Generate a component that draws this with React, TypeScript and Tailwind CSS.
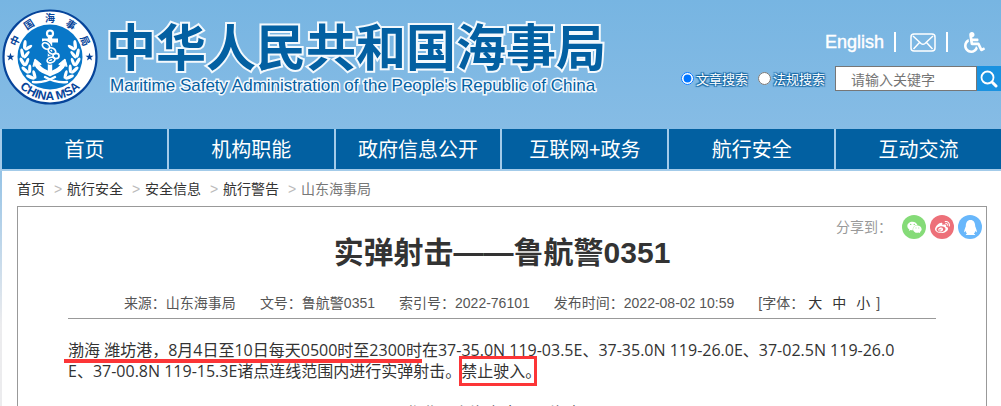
import { useState } from "react";
import { FaWeibo, FaWeixin, FaQq, FaWheelchair } from "react-icons/fa";

const NAV_ITEMS = ["首页", "机构职能", "政府信息公开", "互联网+政务", "航行安全", "互动交流"];

const CRUMBS = ["首页", "航行安全", "安全信息", "航行警告"];

const META = ["来源：山东海事局", "文号：鲁航警0351", "索引号：2022-76101", "发布时间：2022-08-02 10:59"];

const SHARES = [
  { name: "微信", color: "bg-[#85db78]", Icon: FaWeixin },
  { name: "微博", color: "bg-[#ed7079]", Icon: FaWeibo },
  { name: "QQ", color: "bg-[#68b7fb]", Icon: FaQq },
];

const RING_CHARS = [
  { char: "中", angle: -65 },
  { char: "国", angle: -33 },
  { char: "海", angle: 0 },
  { char: "事", angle: 33 },
  { char: "局", angle: 65 },
];

const LEAVES = [-26, -8, 10, 28, 46];

function Wreath() {
  return (
    <g fill="#fff">
      {LEAVES.map((a) => (
        <g key={a} transform={`rotate(${-a})`}>
          <ellipse cx="-28" cy="0" rx="1.7" ry="4.8" transform="rotate(-20 -28 0)" />
          <ellipse cx="-23.5" cy="1" rx="1.6" ry="4.4" transform="rotate(30 -23.5 1)" />
        </g>
      ))}
    </g>
  );
}

function Emblem() {
  return (
    <svg viewBox="-48 -48 96 96" className="w-24 h-24 shrink-0" role="img" aria-label="中国海事局">
      <circle r="46.5" fill="#fff" stroke="#06449a" strokeWidth="2.2" />
      <circle r="32.5" fill="#0877c8" />
      <Wreath />
      <g transform="scale(-1 1)">
        <Wreath />
      </g>
      <g fill="none" stroke="#fff" strokeLinecap="round">
        <circle cx="0" cy="-23.5" r="3" strokeWidth="2.2" />
        <path d="M-8 -16.5H8" strokeWidth="4" strokeLinecap="butt" />
        <path d="M0 -20V14" strokeWidth="4.4" />
        <path d="M-14 6C-11 13 -6 14 0 17C6 14 11 13 14 6" strokeWidth="4.6" />
        <path d="M-17 9L-15 2L-9 7ZM17 9L15 2L9 7Z" strokeWidth="1" fill="#fff" />
        <g stroke="#0877c8" strokeWidth="3.8">
          <ellipse cx="-4" cy="-11" rx="4" ry="2.8" transform="rotate(35 -4 -11)" />
          <ellipse cx="2" cy="-6" rx="4" ry="2.8" transform="rotate(30 2 -6)" />
          <ellipse cx="1" cy="3" rx="4" ry="2.6" transform="rotate(-20 1 3)" />
        </g>
        <g strokeWidth="1.7">
          <ellipse cx="-4" cy="-11" rx="4" ry="2.8" transform="rotate(35 -4 -11)" />
          <ellipse cx="2" cy="-6" rx="4" ry="2.8" transform="rotate(30 2 -6)" />
          <ellipse cx="6" cy="-1" rx="3" ry="2.6" />
          <ellipse cx="1" cy="3" rx="4" ry="2.6" transform="rotate(-20 1 3)" />
        </g>
        <path d="M-17 25C-9 26 -2 24 5 20M17 25C9 26 2 24 -5 20" strokeWidth="2.4" />
      </g>
      <g fill="#06449a">
        {RING_CHARS.map(({ char, angle }) => (
          <text
            key={char}
            y="-35"
            textAnchor="middle"
            transform={`rotate(${angle})`}
            className="font-['Noto_Sans_CJK_SC',sans-serif] text-[10px] font-bold"
          >
            {char}
          </text>
        ))}
        <path id="emblem-arc" d="M-43 0A43 43 0 0 0 43 0" fill="none" />
        <text textAnchor="middle" className="font-['Liberation_Sans',sans-serif] text-[12px] font-bold">
          <textPath href="#emblem-arc" startOffset="50%">CHINA MSA</textPath>
        </text>
        <path d="M0 -4.2L1 -1.3H4L1.6 .6L2.5 3.5L0 1.7L-2.5 3.5L-1.6 .6L-4 -1.3H-1Z" transform="translate(-39.5 0)" />
        <path d="M0 -4.2L1 -1.3H4L1.6 .6L2.5 3.5L0 1.7L-2.5 3.5L-1.6 .6L-4 -1.3H-1Z" transform="translate(39.5 0)" />
      </g>
    </svg>
  );
}

function MailIcon() {
  return (
    <svg viewBox="0 0 26 19" className="w-[26px] h-[19px]" fill="none" stroke="#fff" strokeWidth="1.5">
      <rect x="1" y="1" width="24" height="17" rx="3" />
      <path d="M3 3L11 10.5Q13 12 15 10.5L23 3M3.5 16L9.5 9.5M22.5 16L16.5 9.5" />
    </svg>
  );
}

function SearchIcon() {
  return (
    <svg viewBox="0 0 18 18" className="w-[18px] h-[18px]" fill="none" stroke="#fff" strokeLinecap="round">
      <circle cx="7.5" cy="7.5" r="6" strokeWidth="1.8" />
      <path d="M12.5 12.5L16 16" strokeWidth="3" />
    </svg>
  );
}

function SearchBar() {
  const [scope, setScope] = useState("文章搜索");
  const [keyword, setKeyword] = useState("");

  return (
    <form className="flex items-center" onSubmit={(e) => e.preventDefault()}>
      {["文章搜索", "法规搜索"].map((name) => (
        <label
          key={name}
          className="flex items-center gap-0.5 mr-2.5 text-[13px] text-white [text-shadow:1px_1px_1px_#1466a3,-1px_-1px_1px_#1466a3,1px_-1px_1px_#1466a3,-1px_1px_1px_#1466a3]"
        >
          <input
            type="radio"
            name="scope"
            checked={scope === name}
            onChange={() => setScope(name)}
            className="w-[13px] h-[13px]"
          />
          {name}
        </label>
      ))}
      <input
        type="text"
        aria-label="关键字"
        value={keyword}
        onChange={(e) => setKeyword(e.target.value)}
        placeholder="请输入关键字"
        className="w-[142px] h-[25px] bg-white border border-[#767676] pl-[15px] text-sm text-gray-800 placeholder-[#757575]"
      />
      <button type="submit" aria-label="搜索" className="w-6 h-[25px] bg-[#1a92e0] flex items-center justify-center">
        <SearchIcon />
      </button>
    </form>
  );
}

function Header() {
  return (
    <header className="h-[129px] flex items-start justify-between bg-linear-to-b from-[#77b5e2] to-[#86bce5]">
      <div className="flex pl-0.5">
        <div className="pt-[9px]">
          <Emblem />
        </div>
        <div className="pl-2 pt-4 text-[#0360a2] whitespace-nowrap [paint-order:stroke_fill]">
          <h1 className="text-[50px] leading-[56px] font-bold [-webkit-text-stroke:4px_#f4f9fd]">中华人民共和国海事局</h1>
          <p className="pl-1 pt-1 text-[17px] leading-5 font-['Liberation_Sans',sans-serif] [-webkit-text-stroke:3px_#f4f9fd]">
            Maritime Safety Administration of the People's Republic of China
          </p>
        </div>
      </div>
      <div className="flex flex-col items-end pt-[30px] gap-3 shrink-0">
        <div className="flex items-center h-6 pr-4 text-white">
          <a href="#english" className="text-lg leading-6 font-['Liberation_Sans',sans-serif] [-webkit-text-stroke:0.4px_white]">
            English
          </a>
          <span className="w-0.5 h-5 bg-white ml-2.5 mr-3.5" />
          <a href="#mail" aria-label="邮箱">
            <MailIcon />
          </a>
          <span className="w-0.5 h-5 bg-white ml-2.5 mr-4" />
          <a href="#accessible" aria-label="无障碍">
            <FaWheelchair size={21} />
          </a>
        </div>
        <SearchBar />
      </div>
    </header>
  );
}

export default function App() {
  const [fontSize, setFontSize] = useState("小");

  return (
    <div className="h-screen overflow-hidden bg-linear-to-b from-[#77b5e2] from-30% to-[#ececee] to-80% font-['Noto_Sans_CJK_SC',sans-serif]">
      <Header />
      <nav className="grid grid-cols-6 gap-0.5 pl-0.5 pb-0.5 bg-[#a3cbe9]">
        {NAV_ITEMS.map((item) => (
          <a key={item} href="#nav" className="h-10 bg-[#0260a1] text-white text-xl leading-10 text-center">
            {item}
          </a>
        ))}
      </nav>

      <main className="ml-0.5 bg-white pl-[15px] pr-3.5 h-full font-['Liberation_Sans','Noto_Sans_CJK_SC',sans-serif]">
        <div className="flex items-center h-[35px] text-sm text-[#333]">
          {CRUMBS.map((crumb) => (
            <span key={crumb} className="flex items-center">
              <a href="#crumb">{crumb}</a>
              <span className="w-[22px] pl-1 text-center text-[#bbb]">&gt;</span>
            </span>
          ))}
          <span className="text-[#777]">山东海事局</span>
        </div>

        <article className="border border-[#999] h-full">
          <div className="flex items-center justify-end gap-1 pt-2 pr-1">
            <span className="text-sm text-[#999] mr-1.5">分享到：</span>
            {SHARES.map(({ name, color, Icon }) => (
              <button
                key={name}
                aria-label={name}
                className={`w-6 h-6 rounded-full flex items-center justify-center text-white ${color}`}
              >
                <Icon size={15} />
              </button>
            ))}
          </div>

          <div className="px-[50px]">
            <h2 className="text-3xl leading-7 font-bold text-center text-[#333]">实弹射击——鲁航警0351</h2>
            <div className="flex justify-center gap-6 mt-6 pb-1 h-7 items-center border-b border-[#999] text-sm text-[#555] whitespace-nowrap">
              {META.map((item) => (
                <span key={item}>{item}</span>
              ))}
              <span className="flex">
                [字体：
                {["大", "中", "小"].map((size) => (
                  <button
                    key={size}
                    aria-pressed={fontSize === size}
                    onClick={() => setFontSize(size)}
                    className="ml-1 mr-1.5 text-[#333]"
                  >
                    {size}
                  </button>
                ))}
                ]
              </span>
            </div>

            <p className="mt-[21px] pr-5 text-base leading-[21px] text-[#333] break-all font-['Open_Sans','Noto_Sans_CJK_SC',sans-serif]">
              <span className="relative">
                渤海 潍坊港，8月4日至10日每天0500时至2300时
                <span className="absolute -left-1 right-0 -bottom-0.5 h-1 bg-[#fc3537]" />
              </span>
              在37-35.0N 119-03.5E、37-35.0N 119-26.0E、37-02.5N 119-26.0E、37-00.8N 119-15.3E诸点连线范围内进行实弹射击。
              <span className="relative">
                禁止驶入。
                <span className="absolute -left-0.5 right-1 -inset-y-1 border-3 border-[#fc3537]" />
              </span>
            </p>
            <p className="mt-[21px] text-base leading-[21px] text-center text-[#333]">作业：上海安全国际海事局</p>
          </div>
        </article>
      </main>
    </div>
  );
}
